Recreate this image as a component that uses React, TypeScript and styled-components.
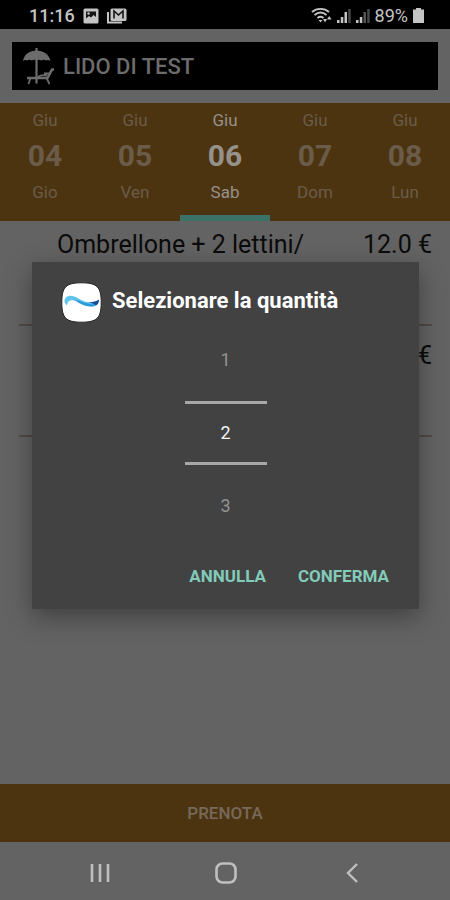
import React, { useState } from "react";
import styled, { createGlobalStyle } from "styled-components";

const GlobalStyle = createGlobalStyle`
  * { box-sizing: border-box; }
  body { margin: 0; background: #636363; font-family: Roboto, "Liberation Sans", sans-serif; }
  button { font-family: inherit; border: 0; padding: 0; background: none; cursor: pointer; }
`;

const Screen = styled.div`
  display: flex;
  flex-direction: column;
  min-height: 100vh;
`;

const StatusBar = styled.header`
  display: flex;
  align-items: center;
  justify-content: space-between;
  height: 29px;
  padding: 2px 26px 0 29px;
  background: #000;
  color: #c4c4c4;
`;

const StatusGroup = styled.div<{ $gap: number }>`
  display: flex;
  align-items: center;
  gap: ${(p) => p.$gap}px;
`;

const StatusText = styled.span<{ $strong?: boolean }>`
  font-size: 18px;
  line-height: 24px;
  font-weight: ${(p) => (p.$strong ? 500 : 400)};
`;

const Content = styled.div`
  position: relative;
  display: flex;
  flex: 1;
  flex-direction: column;
`;

const TitleBar = styled.div`
  display: flex;
  align-items: center;
  gap: 8px;
  height: 48px;
  margin: 13px 12px;
  padding-left: 10px;
  background: #000;
  color: #6c6c6c;
`;

const Title = styled.h1`
  margin: 0;
  padding-top: 2px;
  font-size: 22px;
  line-height: 28px;
  font-weight: 500;
`;

const Days = styled.nav`
  display: grid;
  grid-template-columns: repeat(5, 1fr);
  height: 118px;
  background: #4d3411;
`;

const Day = styled.button<{ $active: boolean }>`
  display: flex;
  flex-direction: column;
  align-items: center;
  padding-top: 5px;
  border-bottom: 6px solid ${(p) => (p.$active ? "#3c7168" : "transparent")};
  color: ${(p) => (p.$active ? "#96918a" : "#6a5c49")};
`;

const DayLabel = styled.span`
  font-size: 17px;
  line-height: 24px;
`;

const DayNumber = styled.span`
  font-size: 30px;
  line-height: 48px;
  font-weight: 700;
`;

const Offers = styled.ul`
  display: flex;
  flex: 1;
  flex-direction: column;
  gap: 6px;
  margin: 0;
  padding: 0 18px 0 19px;
  list-style: none;
`;

const Offer = styled.li`
  display: flex;
  align-items: flex-start;
  justify-content: space-between;
  height: 105px;
  padding: 10px 0 0 38px;
  border-bottom: 2px solid #514b44;
  color: #0b0b0b;
  font-size: 25px;
  line-height: 28px;
`;

const OfferPrice = styled.span`
  margin-left: auto;
`;

const BookButton = styled.button`
  height: 58px;
  background: #4d3411;
  color: #77695a;
  font-size: 17px;
  line-height: 24px;
  font-weight: 500;
`;

const Overlay = styled.div`
  position: absolute;
  inset: 0;
  display: flex;
  align-items: center;
  justify-content: center;
  padding: 0 31px 0 32px;
`;

const Dialog = styled.section`
  display: flex;
  flex: 1;
  flex-direction: column;
  padding: 20px 18px 15px;
  background: #424242;
  box-shadow: 0 8px 24px rgba(0, 0, 0, 0.36);
`;

const DialogHeader = styled.div`
  display: flex;
  align-items: center;
  gap: 10px;
  padding-left: 11px;
`;

const DialogTitle = styled.h2`
  margin: 0;
  padding-bottom: 4px;
  color: #fff;
  font-size: 22px;
  line-height: 28px;
  font-weight: 700;
`;

const Picker = styled.div`
  display: flex;
  flex-direction: column;
  align-items: center;
  align-self: center;
  gap: 17px;
  width: 82px;
  padding-top: 13px;
`;

const PickerValue = styled.button<{ $selected?: boolean }>`
  width: 100%;
  height: ${(p) => (p.$selected ? 64 : 48)}px;
  border-top: ${(p) => (p.$selected ? "3px solid #a8a8a8" : "0")};
  border-bottom: ${(p) => (p.$selected ? "3px solid #a8a8a8" : "0")};
  color: ${(p) => (p.$selected ? "#f4f4f4" : "#929292")};
  font-size: 18px;
  line-height: 24px;
`;

const Actions = styled.div`
  display: flex;
  justify-content: flex-end;
  gap: 8px;
  padding-top: 28px;
`;

const Action = styled.button`
  height: 36px;
  padding: 0 12px;
  color: #83cbb9;
  font-size: 17px;
  line-height: 24px;
  font-weight: 700;
`;

const SystemNav = styled.nav`
  display: flex;
  align-items: center;
  justify-content: space-between;
  height: 58px;
  padding: 3px 82px 0 84px;
  color: #c0c0c0;
`;

const SystemButton = styled.button`
  display: grid;
  place-items: center;
  width: 32px;
  height: 32px;
  color: inherit;
`;

const PhotoIcon = () => (
  <svg width="16" height="16" viewBox="0 0 16 16" aria-hidden="true">
    <rect x="0.5" y="0.5" width="15" height="15" rx="1.5" fill="#c4c4c4" />
    <path d="M3 3.5h10v5.5l-2.500-2-2.500 2.500-2-1.500L3 10.500z" fill="#151515" />
    <circle cx="5.500" cy="5.500" r="1.200" fill="#c4c4c4" />
  </svg>
);

const MailIcon = () => (
  <svg width="20" height="16" viewBox="0 0 20 16" aria-hidden="true">
    <path d="M1 4v10.500h14" fill="none" stroke="#c4c4c4" strokeWidth="2" />
    <rect x="3.500" y="0.500" width="16" height="12.500" rx="1.500" fill="#c4c4c4" />
    <path d="M7 10.500V3l4.500 4L16 3v7.500" fill="none" stroke="#151515" strokeWidth="1.600" />
  </svg>
);

const WifiIcon = () => (
  <svg width="21" height="17" viewBox="0 0 21 17" fill="none" stroke="#c4c4c4" aria-hidden="true">
    <path d="M1 5C5.500.8 13.500.8 18 5M3.500 8c3.700-3 8.300-3 12 0M6.500 11c2-1.600 4-1.600 6 0" strokeWidth="1.900" />
    <path d="M7.500 13h4L9.500 15.500z" fill="#c4c4c4" stroke="none" />
    <path d="M12 12h4l-2 3.500zM16 12.500h4.500L18.250 9z" fill="#c4c4c4" stroke="none" />
  </svg>
);

const SignalIcon = ({ strong }: { strong?: boolean }) => (
  <svg width="14" height="15" viewBox="0 0 14 15" aria-hidden="true">
    <path d="M0 12h2.500v3H0zM3.800 9h2.500v6H3.800z" fill="#c4c4c4" />
    <path d="M7.500 4H10v11H7.500z" fill={strong ? "#c4c4c4" : "#555"} />
    <path d="M11.200 1h2.500v14h-2.500z" fill="#484848" />
  </svg>
);

const BatteryIcon = () => (
  <svg width="11" height="15" viewBox="0 0 11 15" fill="#c4c4c4" aria-hidden="true">
    <path d="M3 0h5v1.500h3V15H0V1.500h3z" />
  </svg>
);

const BeachIcon = () => (
  <svg width="33" height="38" viewBox="0 0 33 38" fill="none" stroke="currentColor" aria-hidden="true">
    <path d="M1 14C2 7 8 3.500 14.500 3.500S27 7 28.500 14q-2-1.500-4.500-.5-2.300-1.500-4.600 0-2.400-1.500-4.900 0-2.400-1.500-4.800 0-2.300-1.500-4.500 0Q3 12.500 1 14z" fill="currentColor" stroke="none" />
    <path d="M14.500 1v3M14.500 13v23.500" strokeWidth="2.200" />
    <path d="M5 31h20.500L30 22.500h2" strokeWidth="2.600" strokeLinejoin="round" />
    <path d="M16 30q3-2.500 9-1.500M22 26.500h5M8.500 31L6.500 37M24.500 31l3 6" strokeWidth="1.800" />
  </svg>
);

const WaveLogo = () => (
  <svg width="41" height="41" viewBox="0 0 41 41" aria-hidden="true">
    <path d="M20.500 .8C36 .8 40.200 5 40.200 20.500S36 40.200 20.500 40.200 .8 36 .8 20.500 5 .8 20.500 .8z" fill="#fff" stroke="#242424" strokeWidth="1" />
    <path d="M3.500 18c2-5.500 8-5 14-1.500 8 4.500 14 5.500 20.500 1.500-1 6-6 8-12 5.500C19 20.500 12 16 7.500 19.500c-1 .8-1 2.500-1.500 4-1.500-1.500-3-3.500-2.500-5.500z" fill="#62c5ed" />
    <path d="M12 17.500c7 .5 13 5 24 5-5 3.500-11 2-17-1-3-1.500-4-3-7-4z" fill="#2b9cda" />
    <path d="M25 20c5 .5 9.500 0 13-2.500 0 3-1 5-3 6-3-2.500-6-3-10-3.500z" fill="#134f9d" />
  </svg>
);

const days = [
  { month: "Giu", number: "04", name: "Gio" },
  { month: "Giu", number: "05", name: "Ven" },
  { month: "Giu", number: "06", name: "Sab" },
  { month: "Giu", number: "07", name: "Dom" },
  { month: "Giu", number: "08", name: "Lun" },
];

const offers = [
  { name: "Ombrellone + 2 lettini/", price: "12.0 €" },
  { name: "", price: "€" },
];

export default function App() {
  const [quantity, setQuantity] = useState(2);
  const [open, setOpen] = useState(true);
  const [day, setDay] = useState("06");

  return (
    <Screen>
      <GlobalStyle />
      <StatusBar>
        <StatusGroup $gap={8}>
          <StatusText $strong>11:16</StatusText>
          <PhotoIcon />
          <MailIcon />
        </StatusGroup>
        <StatusGroup $gap={5}>
          <WifiIcon />
          <SignalIcon strong />
          <SignalIcon />
          <StatusText>89%</StatusText>
          <BatteryIcon />
        </StatusGroup>
      </StatusBar>
      <Content>
        <TitleBar>
          <BeachIcon />
          <Title>LIDO DI TEST</Title>
        </TitleBar>
        <Days>
          {days.map((d) => (
            <Day key={d.number} $active={d.number === day} onClick={() => setDay(d.number)}>
              <DayLabel>{d.month}</DayLabel>
              <DayNumber>{d.number}</DayNumber>
              <DayLabel>{d.name}</DayLabel>
            </Day>
          ))}
        </Days>
        <Offers>
          {offers.map((o, i) => (
            <Offer key={i}>
              {o.name && <span>{o.name}</span>}
              <OfferPrice>{o.price}</OfferPrice>
            </Offer>
          ))}
        </Offers>
        <BookButton onClick={() => setOpen(true)}>PRENOTA</BookButton>
        {open && (
          <Overlay>
            <Dialog role="dialog" aria-labelledby="quantity-title">
              <DialogHeader>
                <WaveLogo />
                <DialogTitle id="quantity-title">Selezionare la quantità</DialogTitle>
              </DialogHeader>
              <Picker>
                <PickerValue onClick={() => setQuantity(Math.max(1, quantity - 1))}>{quantity - 1}</PickerValue>
                <PickerValue $selected>{quantity}</PickerValue>
                <PickerValue onClick={() => setQuantity(quantity + 1)}>{quantity + 1}</PickerValue>
              </Picker>
              <Actions>
                <Action onClick={() => setOpen(false)}>ANNULLA</Action>
                <Action onClick={() => setOpen(false)}>CONFERMA</Action>
              </Actions>
            </Dialog>
          </Overlay>
        )}
      </Content>
      <SystemNav>
        <SystemButton aria-label="Recenti">
          <svg width="20" height="20" viewBox="0 0 20 20" stroke="currentColor" strokeWidth="2.600">
            <path d="M2 1v18M10 1v18M18 1v18" />
          </svg>
        </SystemButton>
        <SystemButton aria-label="Home">
          <svg width="22" height="22" viewBox="0 0 22 22" fill="none" stroke="currentColor" strokeWidth="2.600">
            <rect x="1.500" y="1.500" width="19" height="19" rx="6" />
          </svg>
        </SystemButton>
        <SystemButton aria-label="Indietro">
          <svg width="12" height="20" viewBox="0 0 12 20" fill="none" stroke="currentColor" strokeWidth="2.400">
            <path d="M11 1L2 10l9 9" />
          </svg>
        </SystemButton>
      </SystemNav>
    </Screen>
  );
}
